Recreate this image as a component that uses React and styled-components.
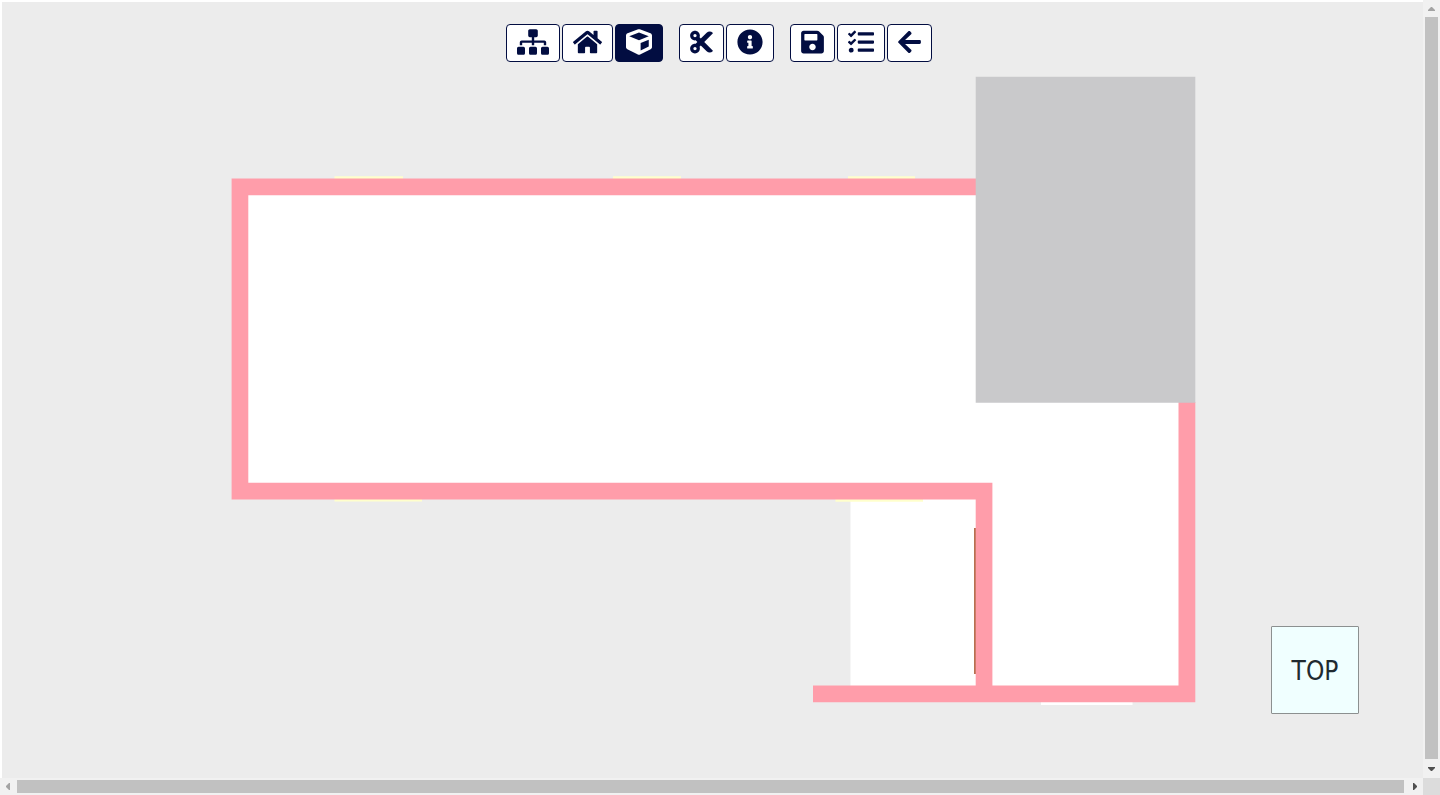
import React from "react";
import styled, { createGlobalStyle } from "styled-components";
import {
  FaSitemap,
  FaHome,
  FaCube,
  FaCut,
  FaInfoCircle,
  FaSave,
  FaTasks,
  FaArrowLeft,
} from "react-icons/fa";

const navy = "#020d41";

const GlobalStyle = createGlobalStyle`
  *, *::before, *::after { box-sizing: border-box; }
  body { margin: 0; background: #fff; font-family: "Liberation Sans", Arial, sans-serif; }
`;

const Frame = styled.div`
  display: grid;
  grid-template-columns: minmax(0, 1fr) 17px;
  grid-template-rows: minmax(0, 1fr) 17px;
  height: 100vh;
`;

const Stage = styled.main`
  display: grid;
  grid-template: minmax(0, 1fr) / minmax(0, 1fr);
  border-top: 2px solid #fff;
  border-left: 2px solid #fff;
  background: #ececec;
`;

const Scene = styled.svg`
  grid-area: 1 / 1;
  display: block;
  width: 100%;
  height: 100%;
`;

const Overlay = styled.div`
  grid-area: 1 / 1;
  display: flex;
  flex-direction: column;
  justify-content: space-between;
  padding: 22px 0 64px 13px;
`;

const Toolbar = styled.nav`
  display: flex;
  justify-content: center;
  gap: 16px;
`;

const ToolGroup = styled.div`
  display: flex;
  gap: 2px;
`;

const ToolButton = styled.button`
  display: flex;
  align-items: center;
  height: 38px;
  padding: 0 10px 2px;
  border: 1px solid ${navy};
  border-radius: 4px;
  background: ${(p) => (p.$active ? navy : "#fff")};
  color: ${(p) => (p.$active ? "#fff" : navy)};
  cursor: pointer;

  svg {
    flex: none;
    width: ${(p) => p.$iconWidth}px;
    height: 26px;
  }
`;

const ViewFace = styled.button`
  align-self: flex-end;
  width: 88px;
  height: 88px;
  margin-right: 64px;
  padding: 2px 0 0;
  border: 1px solid #8c9090;
  border-radius: 1px;
  background: #f0ffff;
  color: #1f2a30;
  font-family: "DejaVu Sans Condensed", "Open Sans", sans-serif;
  font-size: 26px;
  line-height: 32px;
  cursor: pointer;
`;

const ScrollBar = styled.div`
  display: flex;
  flex-direction: ${(p) => (p.$vertical ? "column" : "row")};
  background: #f1f1f1;
`;

const ScrollArrow = styled.svg`
  flex: none;
  width: 17px;
  height: 17px;
  fill: ${(p) => (p.$enabled ? "#505050" : "#a3a3a3")};
`;

const ScrollThumb = styled.div`
  flex: 1;
  margin: ${(p) => (p.$vertical ? "0 2px" : "2px 0")};
  background: #c1c1c1;
`;

const ScrollRest = styled.div`
  flex: none;
  width: 2px;
  height: 2px;
`;

const Corner = styled.div`
  background: #dcdcdc;
`;

const groups = [
  [
    { label: "Structure", Icon: FaSitemap, width: 32 },
    { label: "Home", Icon: FaHome, width: 29 },
    { label: "3D view", Icon: FaCube, width: 26, active: true },
  ],
  [
    { label: "Cut", Icon: FaCut, width: 23 },
    { label: "Information", Icon: FaInfoCircle, width: 26 },
  ],
  [
    { label: "Save", Icon: FaSave, width: 23 },
    { label: "Tasks", Icon: FaTasks, width: 26 },
    { label: "Back", Icon: FaArrowLeft, width: 23 },
  ],
];

function FloorPlan() {
  return (
    <Scene viewBox="2 2 1421 776" role="img" aria-label="Floor plan from above">
      <g fill="#fff">
        <path d="M240 187H1187V694H984V491H240Z" />
        <path d="M850.5 499H976V686H850.5Z" />
        <path d="M1041 702H1132.5V705H1041Z" />
      </g>
      <g fill="#ffffcc">
        <path d="M334.500 176.200H403V179H334.500Z" />
        <path d="M613 176.200H681V179H613Z" />
        <path d="M848 176.200H915V179H848Z" />
        <path d="M334.500 499H422V501.500H334.500Z" />
        <path d="M835.500 499H923V501.700H835.500Z" />
      </g>
      <path fill="#b86f50" d="M974 528H976.500V674H974Z" />
      <path
        fill="#ff9daa"
        d="M231.600 178.600H976V195.300H248.300V482.700H992.400V685.600H1178.500V402H1195.300V702.300H813V685.600H975.700V499.400H231.600Z"
      />
      <path fill="#c9c9cb" d="M975.700 76.800H1195.300V402.800H975.700Z" />
    </Scene>
  );
}

export default function App() {
  return (
    <>
      <GlobalStyle />
      <Frame>
        <Stage>
          <FloorPlan />
          <Overlay>
            <Toolbar aria-label="Viewer tools">
              {groups.map((group) => (
                <ToolGroup key={group[0].label}>
                  {group.map(({ label, Icon, width, active }) => (
                    <ToolButton
                      key={label}
                      type="button"
                      aria-label={label}
                      aria-pressed={active}
                      $active={active}
                      $iconWidth={width}
                    >
                      <Icon aria-hidden="true" />
                    </ToolButton>
                  ))}
                </ToolGroup>
              ))}
            </Toolbar>
            <ViewFace type="button">TOP</ViewFace>
          </Overlay>
        </Stage>
        <ScrollBar $vertical aria-hidden="true">
          <ScrollArrow viewBox="0 0 17 17">
            <path d="M5 11V10L8 7H9L12 10V11Z" />
          </ScrollArrow>
          <ScrollThumb $vertical />
          <ScrollRest />
          <ScrollArrow viewBox="0 0 17 17" $enabled>
            <path d="M5 6H12V7L9 10H8L5 7Z" />
          </ScrollArrow>
        </ScrollBar>
        <ScrollBar aria-hidden="true">
          <ScrollArrow viewBox="0 0 17 17">
            <path d="M10 5V12H9L6 9V8L9 5Z" />
          </ScrollArrow>
          <ScrollThumb />
          <ScrollRest />
          <ScrollArrow viewBox="0 0 17 17" $enabled>
            <path d="M7 5V12H8L11 9V8L8 5Z" />
          </ScrollArrow>
        </ScrollBar>
        <Corner />
      </Frame>
    </>
  );
}
